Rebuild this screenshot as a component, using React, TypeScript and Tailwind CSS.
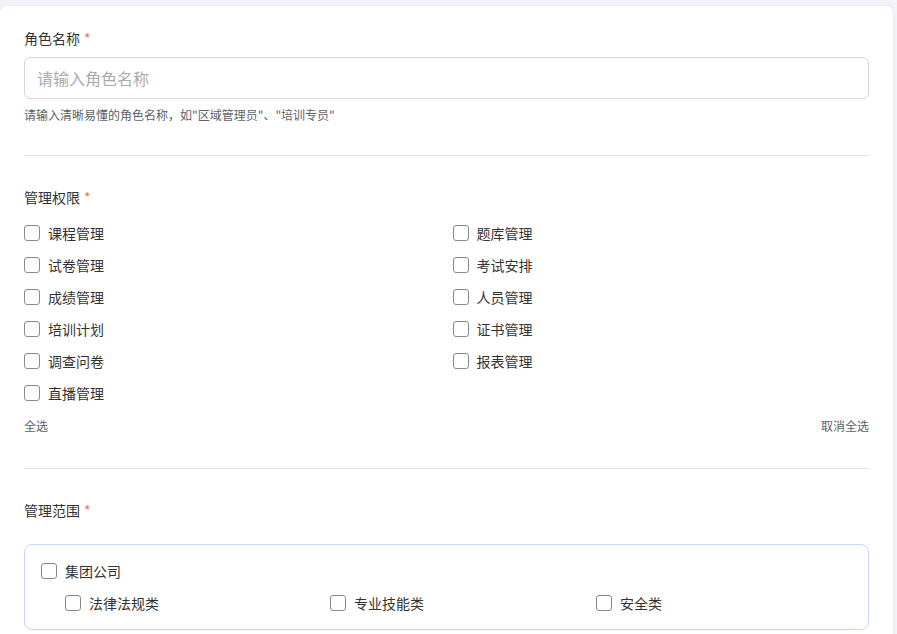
import React from "react";

const font = { fontFamily: '"Noto Sans CJK SC", "Noto Sans", sans-serif' };

function Box() {
  return <span className="inline-block w-4 h-4 shrink-0 rounded-[3px] border border-[#8a8a8a] bg-white" />;
}

function Check({ label }: { label: string }) {
  return (
    <label className="flex items-center gap-2 h-8 text-sm text-[#333333] cursor-pointer">
      <Box />
      <span>{label}</span>
    </label>
  );
}

function Label({ text }: { text: string }) {
  return (
    <div className="text-sm leading-5 text-[#333333]">
      {text}
      <span className="ml-1 text-[#f56c6c]">*</span>
    </div>
  );
}

export default function App() {
  const perms = [
    ["课程管理", "题库管理"],
    ["试卷管理", "考试安排"],
    ["成绩管理", "人员管理"],
    ["培训计划", "证书管理"],
    ["调查问卷", "报表管理"],
    ["直播管理", ""],
  ];
  return (
    <div className="min-h-screen bg-[#f2f3f7] pt-[5px] pr-[3px]" style={font}>
      <div className="bg-white rounded-lg border border-[#ebedf2] px-6 pt-[22px] pb-10 -ml-px">
        <Label text="角色名称" />
        <div className="mt-[9px] h-[42px] rounded-md border border-[#d4d6db] px-3 flex items-center text-base text-[#a8abb2]">
          请输入角色名称
        </div>
        <div className="mt-[8px] text-xs leading-4 text-[#606266]">
          请输入清晰易懂的角色名称，如"区域管理员"、"培训专员"
        </div>
        <div className="mt-8 border-t border-[#e5e6ea]" />

        <div className="mt-[31px]">
          <Label text="管理权限" />
        </div>
        <div className="mt-[10px] grid grid-cols-2 gap-x-3">
          {perms.map(([a, b], i) => (
            <React.Fragment key={i}>
              <Check label={a} />
              {b ? <Check label={b} /> : <div />}
            </React.Fragment>
          ))}
        </div>
        <div className="mt-[9px] flex justify-between text-xs leading-4 text-[#5b6270]">
          <span>全选</span>
          <span>取消全选</span>
        </div>
        <div className="mt-[34px] border-t border-[#e5e6ea]" />

        <div className="mt-[31px]">
          <Label text="管理范围" />
        </div>
        <div className="mt-[24px] rounded-lg border border-[#c6d3fb] p-4">
          <label className="flex items-center gap-2 h-5 text-sm text-[#333333]">
            <Box />
            <span>集团公司</span>
          </label>
          <div className="mt-3 ml-6 grid grid-cols-[265px_266px_1fr]">
            {["法律法规类", "专业技能类", "安全类"].map((t) => (
              <label key={t} className="flex items-center gap-2 h-5 text-sm text-[#333333]">
                <Box />
                <span>{t}</span>
              </label>
            ))}
          </div>
        </div>
      </div>
    </div>
  );
}
